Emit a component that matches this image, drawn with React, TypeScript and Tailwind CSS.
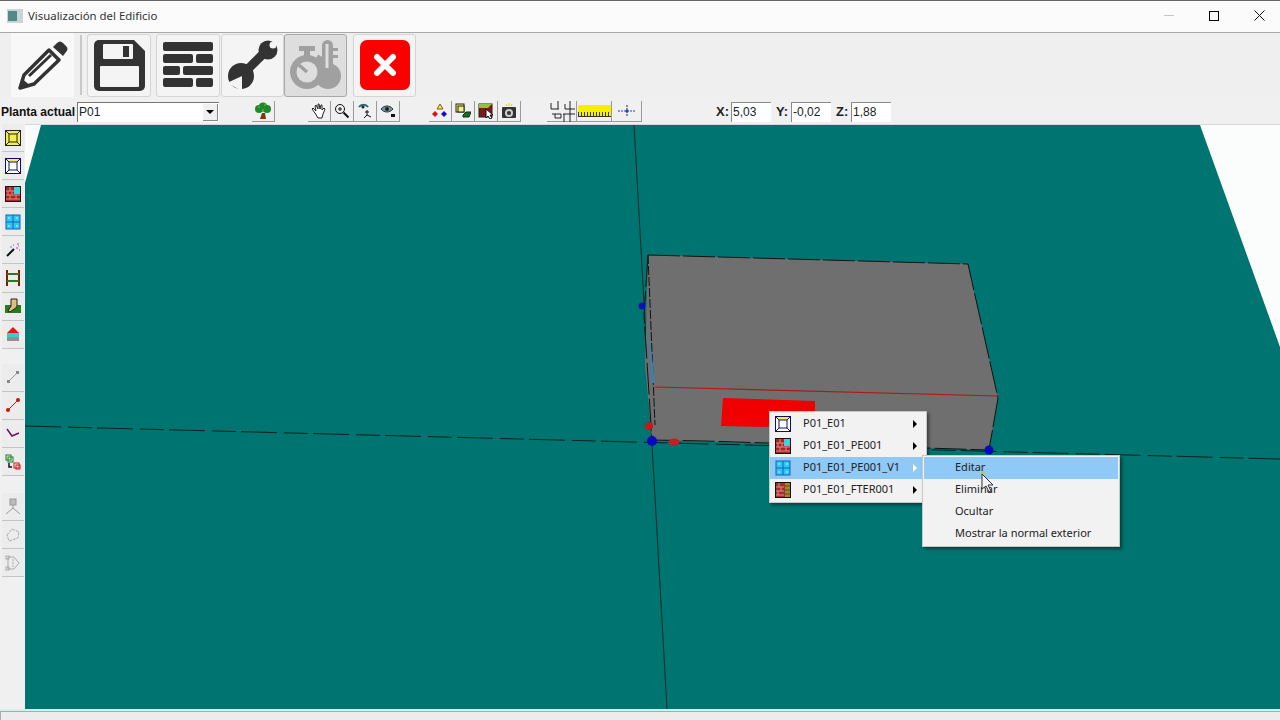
import type { ReactNode } from "react";

const menuFont = { fontFamily: '"Noto Sans", sans-serif' };

function BigButton({ children, muted = false, wide = false }: { children: ReactNode; muted?: boolean; wide?: boolean }) {
   return (
      <div
         className={`flex h-[63px] items-center justify-center rounded-[3px] border ${wide ? "w-[64px]" : "w-[63px]"} ${
            muted ? "border-[#a8a8a8] bg-[#dedede]" : "border-[#d4d4d4] bg-[#f4f4f4]"
         }`}
      >
         {children}
      </div>
   );
}

function SmallButton({ children, className = "w-[23px]" }: { children: ReactNode; className?: string }) {
   return (
      <div className={`flex h-[21px] items-center justify-center border-r border-b border-[#9a9a9a] bg-[#f0f0f0] ${className}`}>
         {children}
      </div>
   );
}

function SideButton({ children }: { children: ReactNode }) {
   return (
      <div className="ml-[2px] flex h-[28.1px] w-[22px] items-center justify-center border-b border-[#c4c4c4] bg-[#ececec]">
         {children}
      </div>
   );
}

function CoordInput({ label, value }: { label: string; value: string }) {
   return (
      <div className="flex items-center">
         <span className="w-[15px] text-[13px] font-bold text-[#222]">{label}:</span>
         <div className="flex h-[20px] w-[40px] items-center border-t border-l border-[#8a8a8a] bg-white pl-[1px] text-[12px] text-[#222]">
            {value}
         </div>
      </div>
   );
}

function WallIcon({ size = 16 }: { size?: number }) {
   return (
      <svg width={size} height={size} viewBox="0 0 16 16">
         <rect x="0.5" y="0.5" width="15" height="15" fill="#a82424" stroke="#201010" />
         <path d="M1 5h8M1 9h14M1 13h14M5 1v4M3 5v4M7 5v4M5 9v4M11 9v4" stroke="#d89088" strokeWidth="1" />
         <rect x="9" y="1" width="6" height="7" fill="#30d8e0" />
      </svg>
   );
}

function FloorIcon({ size = 16 }: { size?: number }) {
   return (
      <svg width={size} height={size} viewBox="0 0 16 16">
         <rect x="0.5" y="0.5" width="15" height="15" fill="#fff" stroke="#101060" />
         <path d="M1 1l14 0-3 3H4z" fill="#f2ee50" />
         <rect x="4" y="4" width="8" height="8" fill="none" stroke="#101060" />
         <path d="M1 1l3 3M15 1l-3 3M1 15l3-3M15 15l-3-3" stroke="#101060" />
      </svg>
   );
}

function WindowIcon({ size = 16 }: { size?: number }) {
   return (
      <svg width={size} height={size} viewBox="0 0 16 16">
         <rect x="1" y="1" width="14" height="14" fill="#30c8f0" stroke="#1060c0" />
         <path d="M8 1v14M1 8h14" stroke="#1060c0" />
         <path d="M3 4l2 0M11 4l2 0M3 12l2 0M11 12l2 0" stroke="#c8f4ff" />
      </svg>
   );
}

function FrameIcon() {
   return (
      <svg width="16" height="16" viewBox="0 0 16 16">
         <rect x="0.5" y="0.5" width="15" height="15" fill="#a82c2c" stroke="#111" />
         <path d="M1 5h8M1 9h8M1 13h8M4 1v4M6 5v4M3 9v4" stroke="#d89088" />
         <rect x="10" y="1" width="5" height="14" fill="#a08830" />
         <path d="M10 4h5M10 8h5M10 12h5" stroke="#5a4a10" />
      </svg>
   );
}

function MenuRow({
   icon,
   label,
   active = false,
   arrow = false,
   indent,
}: {
   icon?: ReactNode;
   label: string;
   active?: boolean;
   arrow?: boolean;
   indent: string;
}) {
   return (
      <div className={`relative flex h-[22px] items-center text-[11px] text-[#222] ${active ? "bg-[#90c8f6]" : ""}`}>
         {icon ? <span className="ml-[5px] flex w-[16px] justify-center">{icon}</span> : null}
         <span className={`pb-[2px] ${indent}`}>{label}</span>
         {arrow ? (
            <span
               className={`absolute right-[9px] h-0 w-0 border-y-[4px] border-l-[4px] border-y-transparent ${
                  active ? "border-l-white" : "border-l-black"
               }`}
            />
         ) : null}
      </div>
   );
}

function Scene() {
   return (
      <svg className="absolute inset-0 h-full w-full" viewBox="0 0 1255 584">
         <polygon points="1175,0 1255,222 1255,0" fill="#fbfcfc" />
         <polygon points="0,58 16,0 0,0" fill="#fbfbfb" />
         <line x1="609" y1="0" x2="642" y2="584" stroke="#1a2a2a" strokeWidth="1" />
         <line x1="0" y1="301" x2="1255" y2="334" stroke="#0a2020" strokeWidth="1" strokeDasharray="36 7 24 5" />
         <polygon points="623,130 943,139 973,273 964,325 627,315 620,240" fill="#6f6f6f" />
         <polyline points="623,130 943,139 973,273 964,325" fill="none" stroke="#111" strokeWidth="1" strokeDasharray="32 3" />
         <polyline points="623,130 619,190 627,315 680,316 964,325" fill="none" stroke="#111" strokeWidth="1" strokeDasharray="32 4" />
         <line x1="623" y1="130" x2="630" y2="300" stroke="#111" strokeWidth="1" strokeDasharray="9 2" />
         <polygon points="623,198 630,258 626,258" fill="#3f7fa8" />
         <line x1="630" y1="262" x2="973" y2="271" stroke="#b01818" strokeWidth="1.2" />
         <polygon points="698,273 790,276 790,303 696,301" fill="#f00000" />
         <circle cx="617" cy="181" r="3.5" fill="#1010b0" />
         <ellipse cx="624" cy="301" rx="4" ry="4" fill="#c81818" />
         <circle cx="627" cy="316" r="5" fill="#0808c0" />
         <ellipse cx="649" cy="317" rx="5.5" ry="3.5" fill="#c02020" />
         <circle cx="964" cy="325" r="4.5" fill="#0808c0" />
      </svg>
   );
}

export default function App() {
   return (
      <div className="flex h-[720px] w-[1280px] flex-col overflow-hidden bg-[#f0f0f0]" style={{ fontFamily: '"Liberation Sans", Arial, sans-serif' }}>
         {/* title bar */}
         <div className="flex h-[33px] shrink-0 items-center border-t border-b border-t-[#666] border-b-[#a8a8a8] bg-[#fbfbfb] pb-[2px]">
            <svg className="ml-[7px]" width="16" height="14" viewBox="0 0 16 14">
               <rect width="16" height="14" fill="#c8d4d8" />
               <rect x="1" y="2" width="9" height="10" fill="#4f8a88" />
            </svg>
            <span className="ml-[5px] text-[11.4px] text-[#333]" style={menuFont}>Visualización del Edificio</span>
            <div className="ml-auto flex items-center">
               <div className="mr-[35px] h-[1px] w-[10px] bg-[#c4c4c4]" />
               <div className="mr-[35px] h-[10px] w-[10px] border border-black" />
               <svg className="mr-[15px]" width="11" height="11" viewBox="0 0 11 11">
                  <path d="M0.5 0.5l10 10M10.5 0.5l-10 10" stroke="#111" strokeWidth="1" />
               </svg>
            </div>
         </div>

         {/* main buttons */}
         <div className="flex h-[64px] shrink-0 items-center bg-[#efefef]">
            <div className="ml-[11px] flex h-[64px] w-[63px] items-center justify-center bg-[#f8f8f8]">
               <svg width="50" height="50" viewBox="0 0 50 50">
                  <path d="M2 48l4-13L31 10l10 10-25 24z" fill="#fff" stroke="#333" strokeWidth="3.5" strokeLinejoin="round" />
                  <path d="M11 36l22-21" stroke="#333" strokeWidth="3" />
                  <path d="M2 48l2.5-9 7 6z" fill="#333" />
                  <path d="M35 7l4-4c2-2 4-2 6 0l3 3c2 2 2 4 0 6l-3 4z" fill="#333" />
               </svg>
            </div>
            <div className="ml-[6px] h-[60px] w-[2px] bg-[#c8c8c8]" />
            <div className="ml-[5px]">
               <BigButton wide>
                  <svg width="51" height="51" viewBox="0 0 51 51">
                     <path d="M5 0h35l11 11v35a5 5 0 0 1-5 5H5a5 5 0 0 1-5-5V5a5 5 0 0 1 5-5z" fill="#333" />
                     <rect x="9" y="4" width="30" height="15" rx="1" fill="#f4f4f4" />
                     <rect x="29" y="6" width="6" height="11" fill="#333" />
                     <rect x="6" y="26" width="39" height="21" rx="1" fill="#f4f4f4" />
                  </svg>
               </BigButton>
            </div>
            <div className="ml-[5px]">
               <BigButton wide>
                  <svg width="50" height="46" viewBox="0 0 50 46">
                     <g fill="#333">
                        <rect x="0" y="0" width="50" height="9" rx="2" />
                        <rect x="0" y="12" width="30" height="9" rx="2" />
                        <rect x="33" y="12" width="17" height="9" rx="2" />
                        <rect x="0" y="24" width="17" height="9" rx="2" />
                        <rect x="20" y="24" width="30" height="9" rx="2" />
                        <rect x="0" y="36" width="30" height="9" rx="2" />
                        <rect x="33" y="36" width="17" height="9" rx="2" />
                     </g>
                  </svg>
               </BigButton>
            </div>
            <div className="ml-[1px]">
               <BigButton>
                  <svg width="50" height="50" viewBox="0 0 50 50">
                     <path d="M13 36L38 11" stroke="#333" strokeWidth="9" />
                     <circle cx="40" cy="10" r="9.5" fill="#333" />
                     <circle cx="45" cy="5" r="3.5" fill="#f4f4f4" />
                     <circle cx="13" cy="36" r="13" fill="#333" />
                     <path d="M-1 43L14 36l0 15z" fill="#f4f4f4" />
                  </svg>
               </BigButton>
            </div>
            <BigButton muted>
               <svg width="52" height="50" viewBox="0 0 52 50">
                  <g fill="#a0a0a0">
                     <rect x="9" y="6" width="16" height="5" />
                     <rect x="14" y="10" width="6" height="6" />
                     <circle cx="17" cy="32" r="17" />
                     <rect x="26" y="16" width="8" height="6" transform="rotate(30 30 19)" />
                     <rect x="32" y="0" width="11" height="36" rx="5.5" />
                     <circle cx="38" cy="36" r="13" />
                     <rect x="43" y="8" width="5" height="3" />
                     <rect x="43" y="15" width="5" height="3" />
                  </g>
                  <circle cx="17" cy="32" r="10.5" fill="#dedede" />
                  <path d="M17 32l-8-7" stroke="#a0a0a0" strokeWidth="3.5" />
                  <rect x="35.5" y="4" width="3" height="24" fill="#dedede" />
               </svg>
            </BigButton>
            <div className="ml-[6px]">
               <BigButton>
                  <div className="flex h-[50px] w-[50px] items-center justify-center rounded-[7px] bg-[#fa0000]">
                     <svg width="24" height="24" viewBox="0 0 24 24">
                        <path d="M4 4l16 16M20 4L4 20" stroke="#fff" strokeWidth="6" strokeLinecap="round" />
                     </svg>
                  </div>
               </BigButton>
            </div>
         </div>

         {/* second toolbar */}
         <div className="flex h-[28px] shrink-0 items-center border-b border-[#d8d8d8] bg-[#f0f0f0] pt-[2px]">
            <span className="ml-[1px] w-[76px] text-[12px] font-bold whitespace-nowrap text-[#111]">Planta actual</span>
            <div className="flex h-[20px] w-[142px] items-center justify-between border-t border-l border-[#777] bg-white pl-[1px] text-[12px] text-[#222]">
               P01
               <div className="mr-[1px] flex h-[17px] w-[15px] items-center justify-center border-r border-b border-[#888] bg-[#f0f0f0]">
                  <span className="h-0 w-0 border-x-[4px] border-t-[4px] border-x-transparent border-t-black" />
               </div>
            </div>
            <div className="ml-[33px]">
               <SmallButton>
                  <svg width="18" height="18" viewBox="0 0 18 18">
                     <path d="M8 11h3l1 6H6z" fill="#7a3a10" />
                     <g fill="#1e8a2a">
                        <circle cx="5" cy="7" r="4" />
                        <circle cx="9" cy="5" r="4.5" />
                        <circle cx="13" cy="7" r="4" />
                     </g>
                     <path d="M4 5h2M10 3h2M8 8h2" stroke="#60c060" />
                  </svg>
               </SmallButton>
            </div>
            <div className="ml-[33px] flex">
               <SmallButton>
                  <svg width="16" height="16" viewBox="0 0 16 16" fill="#fff" stroke="#222">
                     <path d="M4 10L1 6l1-1 3 3-1-5 1-1 2 4V1h1l1 5 1-4h1l0 5 2-2 1 1-2 5-1 4H7z" />
                  </svg>
               </SmallButton>
               <SmallButton>
                  <svg width="16" height="16" viewBox="0 0 16 16" fill="none" stroke="#111">
                     <circle cx="6" cy="6" r="4.5" />
                     <path d="M4 6h4M6 4v4" />
                     <path d="M9.5 9.5l5 5" strokeWidth="2" />
                  </svg>
               </SmallButton>
               <SmallButton>
                  <svg width="16" height="16" viewBox="0 0 16 16" fill="none">
                     <path d="M2 4c2-3 7-3 9 0" stroke="#2a6a70" strokeWidth="2" />
                     <circle cx="6" cy="4" r="1.5" fill="#222" />
                     <path d="M10 7v5M10 12l-3 3M10 12l4 2M8 9h4" stroke="#111" />
                  </svg>
               </SmallButton>
               <SmallButton>
                  <svg width="16" height="16" viewBox="0 0 16 16">
                     <path d="M1 6c3-4 9-4 12 0-3 4-9 4-12 0z" fill="#6a9aa0" stroke="#333" />
                     <circle cx="7" cy="6" r="2" fill="#222" />
                     <rect x="11" y="11" width="4" height="3" fill="#111" />
                  </svg>
               </SmallButton>
            </div>
            <div className="ml-[29px] flex">
               <SmallButton>
                  <svg width="16" height="16" viewBox="0 0 16 16">
                     <path d="M8 1l3 5H5z" fill="#f4e860" stroke="#806000" />
                     <path d="M3 8l3 3-3 3-3-3z" fill="#e01010" />
                     <path d="M12 8l3 3-3 3-3-3z" fill="#1010c0" />
                  </svg>
               </SmallButton>
               <SmallButton>
                  <svg width="16" height="16" viewBox="0 0 16 16">
                     <rect x="1" y="1" width="8" height="8" fill="#f4f080" stroke="#222" />
                     <rect x="3" y="3" width="6" height="6" fill="#f4f080" stroke="#222" />
                     <path d="M8 12l3-3h5l-2 5H8z" fill="#1e6a2a" stroke="#103010" />
                  </svg>
               </SmallButton>
               <SmallButton>
                  <svg width="16" height="16" viewBox="0 0 16 16">
                     <rect x="1" y="1" width="13" height="13" fill="#7a1a1a" stroke="#222" />
                     <path d="M1 1h13l-4 4H1z" fill="#90c040" />
                     <path d="M8 6l7 6-3 0 2 3-2 1-2-3-2 2z" fill="#fff" stroke="#111" />
                  </svg>
               </SmallButton>
               <SmallButton>
                  <svg width="16" height="16" viewBox="0 0 16 16">
                     <rect x="1" y="4" width="14" height="11" rx="1" fill="#333" />
                     <circle cx="8" cy="10" r="4" fill="#ccc" />
                     <circle cx="8" cy="10" r="2" fill="#333" />
                     <path d="M5 1l1 2M8 0v3M11 1l-1 2" stroke="#d8d020" />
                  </svg>
               </SmallButton>
            </div>
            <div className="ml-[26px] flex">
               <SmallButton className="w-[30px]">
                  <svg width="28" height="21" viewBox="0 0 28 21" fill="none" stroke="#222">
                     <path d="M3 2v6h8M10 0v8M17 3v5h10M22 0v21M15 13h12M16 13v8M7 13h6v4H7zM4 13h3" />
                  </svg>
               </SmallButton>
               <SmallButton className="w-[35px]">
                  <div className="flex h-[12px] w-[33px] items-end bg-[#f4f000]">
                     <div className="h-[5px] w-full border-b border-[#333] bg-[repeating-linear-gradient(90deg,#333_0,#333_1px,transparent_1px,transparent_3px)]" />
                  </div>
               </SmallButton>
               <SmallButton className="w-[30px]">
                  <svg width="18" height="16" viewBox="0 0 18 16" fill="none">
                     <path d="M0 8h18" stroke="#2040c0" strokeDasharray="2 1" />
                     <path d="M9 2v12" stroke="#223" strokeDasharray="2 1" />
                     <circle cx="9" cy="8" r="1.5" fill="#2040c0" />
                  </svg>
               </SmallButton>
            </div>
            <div className="ml-[74px] flex gap-[5px]">
               <CoordInput label="X" value="5,03" />
               <CoordInput label="Y" value="-0,02" />
               <CoordInput label="Z" value="1,88" />
            </div>
         </div>

         <div className="flex min-h-0 flex-1">
            {/* left tools */}
            <div className="-mt-[1px] flex w-[25px] shrink-0 flex-col bg-[#f0f0f0]">
               <SideButton><svg width="16" height="16" viewBox="0 0 16 16"><rect x="0.5" y="0.5" width="15" height="15" fill="#f2ee50" stroke="#222" /><rect x="4" y="4" width="8" height="8" fill="none" stroke="#222" /><path d="M1 1l3 3M15 1l-3 3M1 15l3-3M15 15l-3-3" stroke="#222" /></svg></SideButton>
               <SideButton><FloorIcon /></SideButton>
               <SideButton><WallIcon /></SideButton>
               <SideButton><WindowIcon /></SideButton>
               <SideButton>
                  <svg width="16" height="16" viewBox="0 0 16 16">
                     <path d="M2 14l7-7" stroke="#111" strokeWidth="2" />
                     <path d="M8 3h1M12 2h2M11 6h2M14 8h1" stroke="#d03090" />
                     <path d="M5 5h2M13 4h1" stroke="#30a0c0" />
                  </svg>
               </SideButton>
               <SideButton>
                  <svg width="16" height="18" viewBox="0 0 16 18" fill="none" stroke="#7a1a10" strokeWidth="2">
                     <path d="M2 1v16M14 1v16" />
                     <path d="M2 5h12M2 12h12" stroke="#2a7a20" />
                  </svg>
               </SideButton>
               <SideButton>
                  <svg width="16" height="16" viewBox="0 0 16 16">
                     <rect x="0" y="7" width="16" height="8" fill="#2a7a20" />
                     <path d="M6 1h6v8l-7 5-2-1 3-5z" fill="#e0c080" stroke="#222" />
                  </svg>
               </SideButton>
               <SideButton>
                  <svg width="16" height="16" viewBox="0 0 16 16">
                     <path d="M8 1l6 6H2z" fill="#e01818" />
                     <rect x="2" y="7" width="12" height="4" fill="#30d0d0" />
                     <rect x="2" y="11" width="12" height="4" fill="#909090" />
                  </svg>
               </SideButton>
               <div className="h-[15px]" />
               <SideButton><svg width="14" height="14" viewBox="0 0 14 14"><path d="M2 12l10-10" stroke="#999" /><rect x="1" y="10" width="3" height="3" fill="#888" /><rect x="10" y="1" width="3" height="3" fill="#888" /></svg></SideButton>
               <SideButton><svg width="14" height="14" viewBox="0 0 14 14"><path d="M2 12l10-10" stroke="#d01818" /><circle cx="2" cy="12" r="2" fill="#c01818" /><circle cx="12" cy="2" r="2" fill="#c01818" /></svg></SideButton>
               <SideButton><svg width="14" height="12" viewBox="0 0 14 12" fill="none"><path d="M1 2l5 7 7-3" stroke="#701060" strokeWidth="1.5" /></svg></SideButton>
               <SideButton>
                  <svg width="16" height="16" viewBox="0 0 16 16" fill="none">
                     <rect x="1" y="1" width="5" height="5" stroke="#108020" />
                     <rect x="3" y="3" width="5" height="5" stroke="#108020" />
                     <path d="M4 9v4h3" stroke="#111" strokeWidth="1.5" />
                     <rect x="9" y="9" width="5" height="5" stroke="#d01818" />
                     <rect x="11" y="11" width="4" height="4" stroke="#d01818" />
                  </svg>
               </SideButton>
               <div className="h-[17px]" />
               <SideButton><svg width="16" height="18" viewBox="0 0 16 18" fill="none" stroke="#999"><rect x="5" y="1" width="6" height="6" fill="#bbb" /><path d="M8 7v3L1 16M8 10l7 6" /></svg></SideButton>
               <SideButton><svg width="16" height="16" viewBox="0 0 16 16" fill="none" stroke="#aaa"><path d="M2 8l5-6 7 3-1 6-9 3z" strokeDasharray="3 1" /></svg></SideButton>
               <SideButton><svg width="16" height="16" viewBox="0 0 16 16" fill="none" stroke="#aaa"><path d="M3 2h6l5 6-5 6H3z" /><path d="M8 4v8" strokeDasharray="2 1" /><rect x="1" y="1" width="3" height="3" /><rect x="1" y="12" width="3" height="3" /></svg></SideButton>
            </div>

            {/* 3D canvas */}
            <div className="relative flex-1 bg-[#007470]">
               <Scene />
               <div className="absolute left-[744px] top-[286px] w-[158px] border border-[#c8c8c8] bg-[#f2f2f2] py-[1px] shadow-[2px_2px_3px_rgba(0,0,0,0.45)]" style={menuFont}>
                  <MenuRow icon={<FloorIcon />} label="P01_E01" arrow indent="ml-[12px]" />
                  <MenuRow icon={<WallIcon />} label="P01_E01_PE001" arrow indent="ml-[12px]" />
                  <MenuRow icon={<WindowIcon />} label="P01_E01_PE001_V1" arrow active indent="ml-[12px]" />
                  <MenuRow icon={<FrameIcon />} label="P01_E01_FTER001" arrow indent="ml-[12px]" />
               </div>
               <div className="absolute left-[897px] top-[330px] w-[198px] border border-[#c8c8c8] bg-[#f2f2f2] p-[1px] shadow-[2px_2px_3px_rgba(0,0,0,0.45)]" style={menuFont}>
                  <MenuRow label="Editar" active indent="ml-[31px]" />
                  <MenuRow label="Eliminar" indent="ml-[31px]" />
                  <MenuRow label="Ocultar" indent="ml-[31px]" />
                  <MenuRow label="Mostrar la normal exterior" indent="ml-[31px]" />
               </div>
               <svg className="absolute left-[956px] top-[346px]" width="14" height="23" viewBox="0 0 14 23">
                  <circle cx="2" cy="2" r="2" fill="#b8c84a" />
                  <path d="M1 3v15l4-3 3 6 2-1-3-6h5z" fill="#f4f4f4" stroke="#333" />
               </svg>
            </div>
         </div>

         {/* status strip */}
         <div className="h-[2px] shrink-0 bg-[#d4f0f0]" />
         <div className="h-[9px] shrink-0 border-t border-l border-[#aaa] bg-[#ececec]" />
      </div>
   );
}
